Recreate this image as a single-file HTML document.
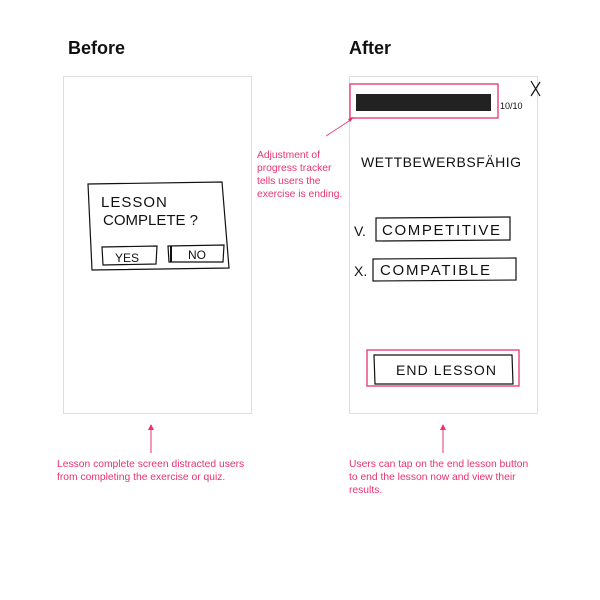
<!DOCTYPE html>
<html><head><style>
body{margin:0;width:600px;height:600px;background:#fff;position:relative;font-family:"Liberation Sans",sans-serif;overflow:hidden}
.t{position:absolute;font-weight:bold;font-size:18px;color:#111}
.fr{position:absolute;border:1px solid #ddd;background:#fff}
.note{position:absolute;color:#e8336f;font-size:10.3px;line-height:13px}
.hw{font-family:"Liberation Sans",sans-serif;fill:#111;font-weight:normal}
</style></head><body>
<div class="t" style="left:68px;top:38px">Before</div>
<div class="t" style="left:349px;top:38px">After</div>
<div class="fr" style="left:63px;top:76px;width:187px;height:336px"></div>
<div class="fr" style="left:349px;top:76px;width:187px;height:336px"></div>
<svg width="600" height="600" style="position:absolute;left:0;top:0">
<g fill="none" stroke="#111" stroke-width="1.2">
<path d="M88 184 L222 182 L229 268 L92 270 Z"/>
<path d="M102 247 L157 246 L156 264 L103 265 Z"/>
<path d="M168 246 L224 245 L223 262 L169 262 Z"/>
<path d="M171 246 L171 262" stroke-width="2"/>
<path d="M376 218 L510 217 L510 240 L376 241 Z"/>
<path d="M373 259 L516 258 L516 280 L373 281 Z"/>
<path d="M374 355 L512 355 L513 384 L375 384 Z"/>
<path d="M531 81 L540 96 M540 82 L531 96"/>
</g>
<rect x="356" y="94" width="135" height="17" fill="#222"/>
<g fill="none" stroke="#e8336f" stroke-width="1.3">
<rect x="350" y="84" width="148" height="34"/>
<rect x="367" y="350" width="152" height="36"/>
<path d="M326 136 L352 119" stroke-width="0.8"/>
<path d="M151 428 L151 453 M443 428 L443 453" stroke-width="1"/>
</g>
<path d="M354 117 L348 119 L350 122Z M151 424 L148 430 L154 430Z M443 424 L440 430 L446 430Z" fill="#e8336f"/>
<g class="hw" font-size="14">
<text x="101" y="207" font-size="15" letter-spacing="1">LESSON</text>
<text x="103" y="225" font-size="15">COMPLETE ?</text>
<text x="115" y="262" font-size="12">YES</text>
<text x="188" y="259" font-size="12">NO</text>
<text x="361" y="167" font-size="14" textLength="160">WETTBEWERBSFÄHIG</text>
<text x="354" y="236" font-size="14">V.</text>
<text x="382" y="235" font-size="15" textLength="118">COMPETITIVE</text>
<text x="354" y="276" font-size="14">X.</text>
<text x="380" y="275" font-size="15" textLength="110">COMPATIBLE</text>
<text x="396" y="375" font-size="14" textLength="100">END LESSON</text>
<text x="500" y="109" font-size="9">10/10</text>
</g>
</svg>
<div class="note" style="left:257px;top:149px">Adjustment of<br>progress tracker<br>tells users the<br>exercise is ending.</div>
<div class="note" style="left:57px;top:458px">Lesson complete screen distracted users<br>from completing the exercise or quiz.</div>
<div class="note" style="left:349px;top:458px">Users can tap on the end lesson button<br>to end the lesson now and view their<br>results.</div>
</body></html>
